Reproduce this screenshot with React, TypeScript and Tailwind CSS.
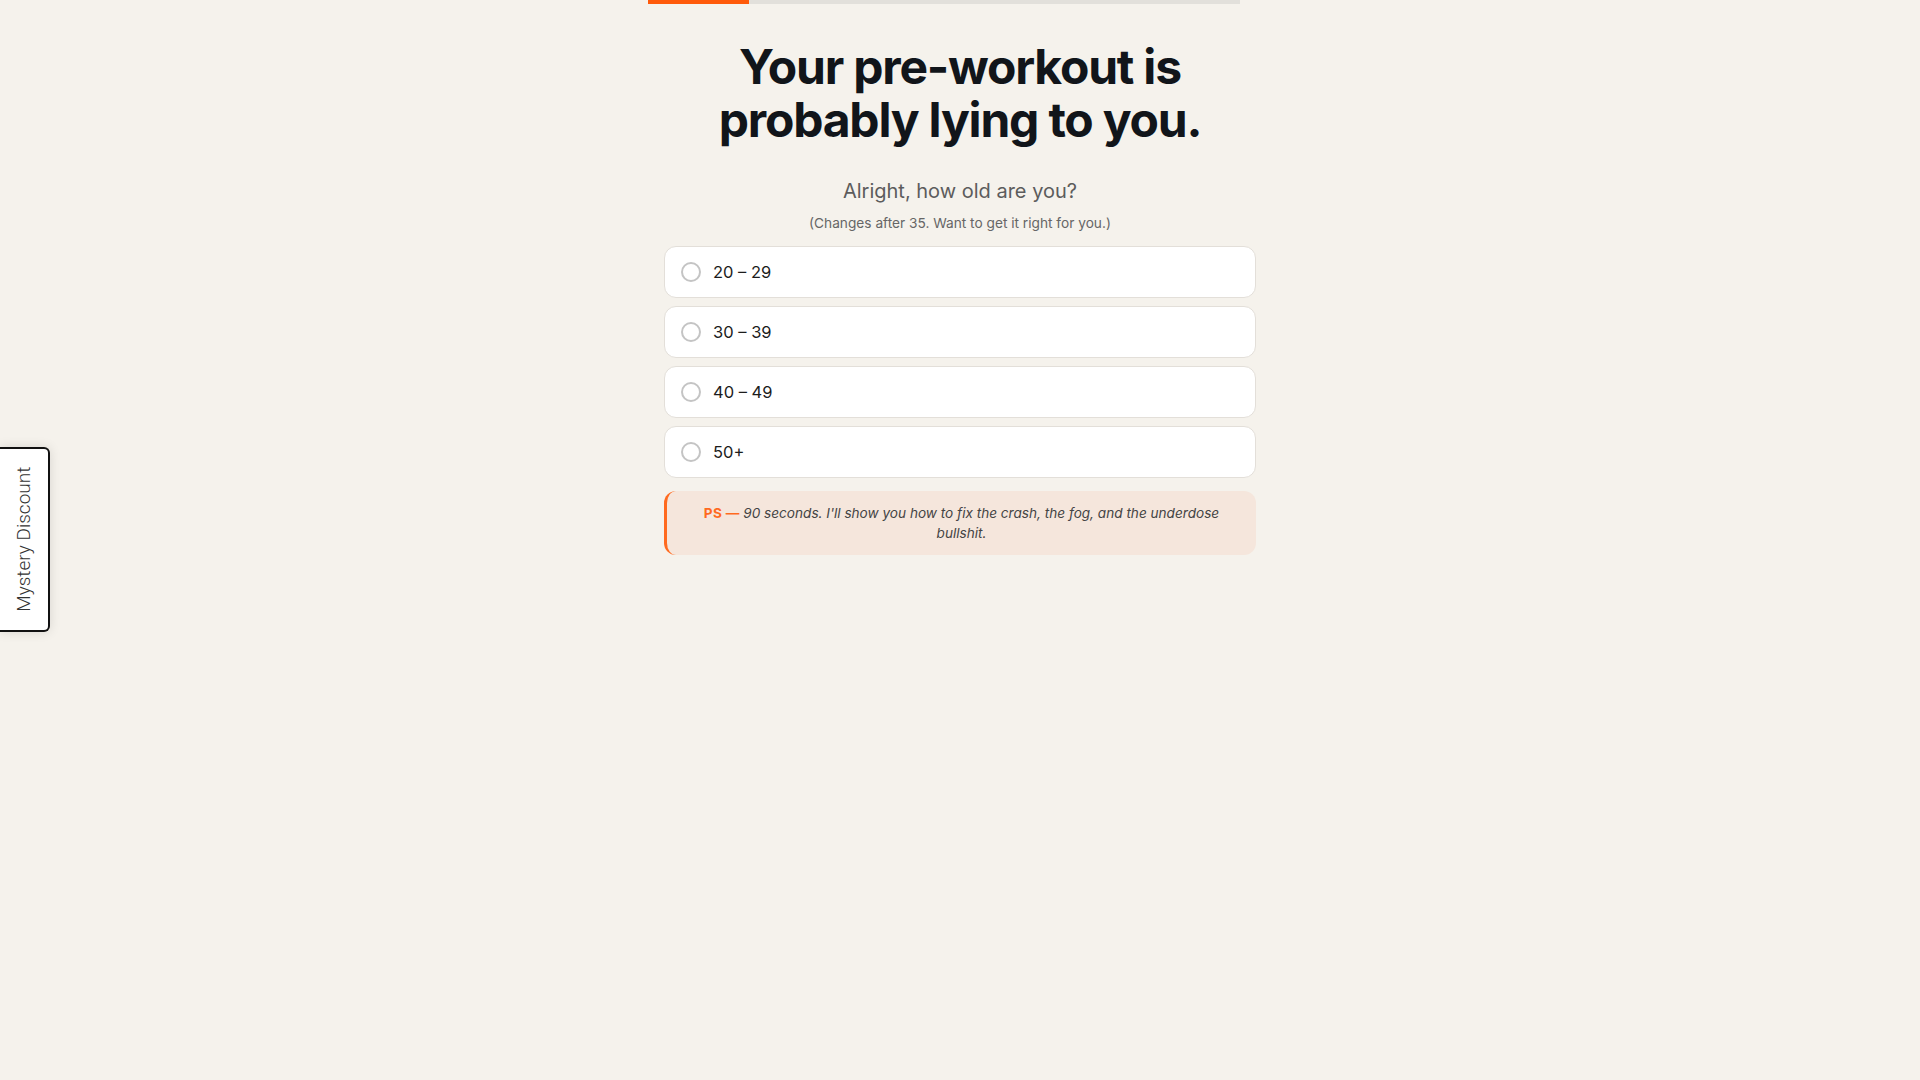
import { useState } from 'react';

const ages = ['20 – 29', '30 – 39', '40 – 49', '50+'];

function AgeOption({ label, selected, onSelect }: { label: string; selected: boolean; onSelect: () => void }) {
  return (
    <button
      onClick={onSelect}
      className="flex h-[52px] w-full items-center gap-3 rounded-xl border border-[#e3dfd9] bg-white px-4 text-left"
    >
      <span
        className={
          selected
            ? 'h-5 w-5 shrink-0 rounded-full border-[6px] border-[#ff5a0a] bg-white'
            : 'h-5 w-5 shrink-0 rounded-full border-2 border-[#c4c4c4] bg-white'
        }
      />
      <span className="text-[16.5px] text-[#1c1c1c]">{label}</span>
    </button>
  );
}

export default function App() {
  const [age, setAge] = useState<string | null>(null);

  return (
    <div className="relative min-h-screen bg-[#f5f2ec] font-['Inter',sans-serif]">
      <div className="flex justify-center pr-8">
        <div className="h-1 w-[592px] bg-[#e2e0db]">
          <div className="h-1 w-[17%] bg-[#ff5a0a]" />
        </div>
      </div>

      <div className="mx-auto w-[592px]">
        <h1 className="mt-9 text-center text-[48px] font-bold leading-[53px] tracking-[-0.025em] text-[#11151a]">
          Your pre-workout is
          <br />
          probably lying to you.
        </h1>

        <p className="mt-[31px] text-center text-[20px] leading-7 text-[#5c5c5c]">Alright, how old are you?</p>
        <p className="mt-2 text-center text-[13.7px] leading-5 text-[#666]">(Changes after 35. Want to get it right for you.)</p>

        <div className="mt-[13px] flex flex-col gap-2">
          {ages.map((a) => (
            <AgeOption key={a} label={a} selected={age === a} onSelect={() => setAge(a)} />
          ))}
        </div>

        <div className="mt-[13px] rounded-xl border-l-[3px] border-[#ff6a1f] bg-[#f5e6dc] px-6 py-3 text-center text-[13.6px] leading-5 text-[#444]">
          <span className="font-bold tracking-wide text-[#ff6a1f]">PS — </span>
          <span className="italic">90 seconds. I'll show you how to fix the crash, the fog, and the underdose bullshit.</span>
        </div>
      </div>

      <button className="absolute left-0 top-[447px] flex h-[185px] w-[50px] items-center justify-center rounded-r-md border-2 border-l-0 border-[#111] bg-white shadow-[0_0_12px_rgba(0,0,0,0.12)]">
        <span className="-rotate-90 whitespace-nowrap pt-0.5 font-['Roboto',sans-serif] text-[19px] font-light text-[#333]">
          Mystery Discount
        </span>
      </button>
    </div>
  );
}
